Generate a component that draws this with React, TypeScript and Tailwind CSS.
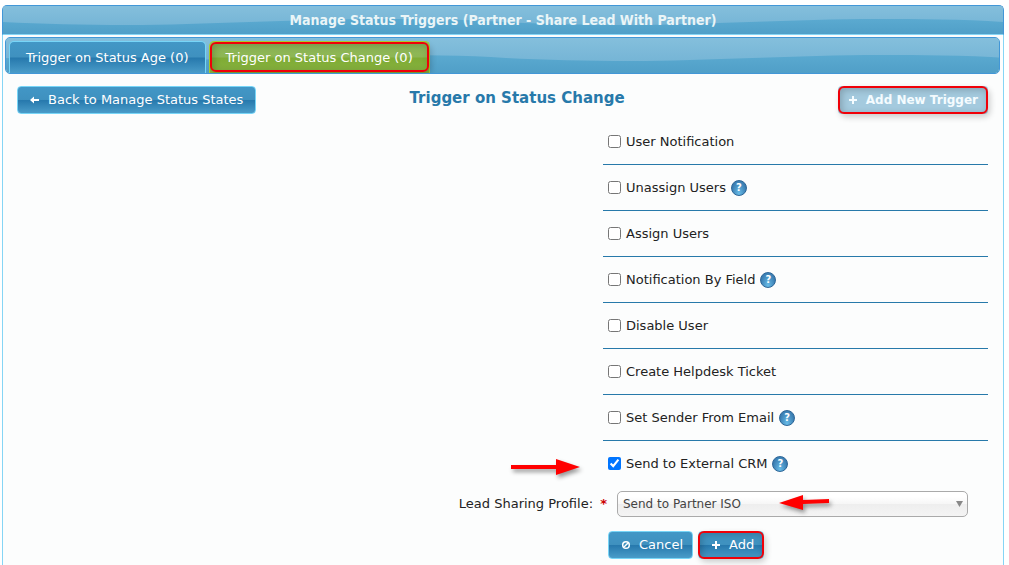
import { useId, useState, type ReactNode } from "react";
import { clsx } from "clsx";

const triggers = [
  { id: "user-notification", label: "User Notification", help: false },
  { id: "unassign-users", label: "Unassign Users", help: true },
  { id: "assign-users", label: "Assign Users", help: false },
  { id: "notification-by-field", label: "Notification By Field", help: true },
  { id: "disable-user", label: "Disable User", help: false },
  { id: "create-ticket", label: "Create Helpdesk Ticket", help: false },
  { id: "set-sender", label: "Set Sender From Email", help: true },
  { id: "external-crm", label: "Send to External CRM", help: true },
];

// Glossy wave behind the header bars, repeats every 500px
function WaveBackground({ tall }: { tall?: boolean }) {
  const id = useId();
  return (
    <svg className="absolute inset-0 h-full w-full" aria-hidden="true">
      <defs>
        <linearGradient id={`${id}-low`} x1="0" y1="0" x2="0" y2="1">
          <stop offset="0.4" stopColor="#5cabd1" />
          <stop offset="1" stopColor="#509fc8" />
        </linearGradient>
        <linearGradient id={`${id}-top`} x1="0" y1="0" x2="0" y2="1">
          <stop offset="0" stopColor="#84bfdc" />
          <stop offset="1" stopColor="#76b5d6" />
        </linearGradient>
        <pattern id={`${id}-wave`} width="500" height="40" patternUnits="userSpaceOnUse">
          <path
            d={
              tall
                ? "M0 0H500V20C460 17 415 17 375 17C290 17 200 23 125 23C80 23 40 22 0 20Z"
                : "M0 0H500V16C460 13 415 13 375 13C290 13 200 19 125 19C80 19 40 18 0 16Z"
            }
            fill={`url(#${id}-top)`}
          />
        </pattern>
      </defs>
      <rect width="100%" height="100%" fill={`url(#${id}-low)`} />
      <rect width="100%" height="100%" fill={`url(#${id}-wave)`} />
    </svg>
  );
}

// Red highlight box laid over a control
function Highlight({ className }: { className?: string }) {
  return (
    <span
      className={clsx(
        "pointer-events-none absolute rounded-md border-2 border-[#f00008] shadow-[2px_3px_6px_rgba(0,0,0,0.2),inset_2px_2px_7px_rgba(0,0,0,0.2)]",
        className ?? "inset-0"
      )}
    />
  );
}

function HelpIcon({ label }: { label: string }) {
  return (
    <button
      type="button"
      aria-label={`Help: ${label}`}
      className="flex h-4 w-4 items-center justify-center rounded-full border border-[#2c6698] bg-radial-[at_50%_90%] from-[#68bce8] to-[#2a679e] text-[10px] leading-none font-bold text-white"
    >
      ?
    </button>
  );
}

function GlossButton({ icon, children, highlight }: { icon: ReactNode; children: ReactNode; highlight?: boolean }) {
  return (
    <button
      type="button"
      className="relative flex h-7 items-center gap-2 rounded border border-[#77d5f7] bg-[linear-gradient(#4297c6_0%,#3f91bf_48%,#2779ad_52%,#4a9cc9_100%)] pr-[9px] pl-3 text-white"
    >
      {icon}
      {children}
      {highlight && <Highlight className="-inset-px" />}
    </button>
  );
}

function PlusIcon() {
  return (
    <svg width="10" height="10" viewBox="0 0 10 10" stroke="currentColor" strokeWidth="2" aria-hidden="true">
      <path d="M5 1V9M1 5H9" />
    </svg>
  );
}

function ArrowLeftIcon() {
  return (
    <svg width="10" height="10" viewBox="0 0 10 10" fill="currentColor" aria-hidden="true">
      <path d="M0 5L4 1.5V4H9V6H4V8.5Z" />
    </svg>
  );
}

function CancelIcon() {
  return (
    <svg width="10" height="10" viewBox="0 0 10 10" fill="none" stroke="currentColor" strokeWidth="1.5" aria-hidden="true">
      <circle cx="5" cy="5" r="3.3" />
      <path d="M3 7L7 3" />
    </svg>
  );
}

export default function App() {
  const [checked, setChecked] = useState<string[]>(["external-crm"]);

  const toggle = (id: string) =>
    setChecked((prev) => (prev.includes(id) ? prev.filter((item) => item !== id) : [...prev, id]));

  return (
    <div className="flex h-screen flex-col overflow-hidden bg-white pt-[5px] pr-[5px] pl-[2px] font-['DejaVu_Sans',Verdana,sans-serif] text-[13px] text-[#222]">
      <header className="relative flex h-[30px] shrink-0 items-center justify-center overflow-hidden rounded-t-[5px] border border-[#4297d7] border-b-[#85d5f5]">
        <WaveBackground />
        <h1 className="relative font-['DejaVu_Sans_Condensed','DejaVu_Sans',sans-serif] text-[14px] font-bold text-[#eaf5f7]">
          Manage Status Triggers (Partner - Share Lead With Partner)
        </h1>
      </header>

      <main className="flex-1 border-x border-[#85d5f5] bg-[#fcfdfd] pt-[2px] pr-[3px] pl-[2px]">
        <nav className="relative h-[37px] overflow-hidden rounded-[5px] border border-[#4297d7]">
          <WaveBackground tall />
          <div className="relative flex h-full items-end gap-[3px] pl-[3px]">
            <button
              type="button"
              className="h-8 rounded-t-[5px] border border-b-0 border-[#77d5f7] bg-[linear-gradient(#4297c6_0%,#3f91bf_48%,#2779ad_52%,#4a9cc9_100%)] px-4 text-white"
            >
              Trigger on Status Age (0)
            </button>
            <button
              type="button"
              className="relative h-8 rounded-t-[5px] border border-b-0 border-[#acd12f] bg-[linear-gradient(#8fb95a_0%,#8db654_48%,#7fac35_52%,#86b13f_100%)] px-4 text-white"
            >
              Trigger on Status Change (0)
              <Highlight className="inset-x-0 top-0 bottom-px" />
            </button>
          </div>
        </nav>

        <div className="px-3">
          <div className="mt-3 grid grid-cols-[25%_1fr_22%] items-center">
            <div className="flex">
              <GlossButton icon={<ArrowLeftIcon />}>
                <span className="pr-[3px] whitespace-nowrap">Back to Manage Status States</span>
              </GlossButton>
            </div>
            <h2 className="pb-1 text-center text-[15px] font-bold text-[#2779aa]">Trigger on Status Change</h2>
            <div className="flex justify-end">
              <button
                type="button"
                disabled
                className="relative flex h-7 items-center gap-2 rounded bg-[#a4cade] px-[10px] text-[12px] font-bold whitespace-nowrap text-[#f5fcff]"
              >
                <PlusIcon />
                Add New Trigger
                <Highlight />
              </button>
            </div>
          </div>

          <form className="mt-[5px] flex flex-col items-end">
            <ul className="w-[385px]">
              {triggers.map(({ id, label, help }) => (
                <li
                  key={id}
                  className="relative flex h-[46px] items-center gap-[5px] border-b border-[#2779aa] pl-[5px] last:border-b-transparent"
                >
                  {id === "external-crm" && (
                    <svg
                      className="absolute top-[17px] -left-[92px] drop-shadow-[2px_3px_2px_rgba(0,0,0,0.4)]"
                      width="70"
                      height="18"
                      viewBox="0 0 70 18"
                      fill="#f00"
                      aria-hidden="true"
                    >
                      <path d="M0 7H45V1L69 9L45 17V11H0Z" />
                    </svg>
                  )}
                  <input
                    id={id}
                    type="checkbox"
                    className="h-[13px] w-[13px]"
                    checked={checked.includes(id)}
                    onChange={() => toggle(id)}
                  />
                  <label htmlFor={id}>{label}</label>
                  {help && <HelpIcon label={label} />}
                </li>
              ))}
            </ul>

            <div className="mt-1 flex items-center pr-5">
              <label htmlFor="profile">
                Lead Sharing Profile: <span className="ml-[3px] font-bold text-[#c00]">*</span>
              </label>
              <div className="relative ml-[10px] w-[351px]">
                <select
                  id="profile"
                  className="h-[26px] w-full appearance-none rounded-[5px] border border-[#aaa] bg-[linear-gradient(#fff_20%,#f6f6f6_50%,#eee_52%,#f4f4f4_100%)] px-[5px] text-[12px] text-[#444]"
                >
                  <option>Send to Partner ISO</option>
                </select>
                <svg className="pointer-events-none absolute top-[10px] right-[5px]" width="7" height="6" fill="#888" aria-hidden="true">
                  <path d="M0 0H7L3.5 6Z" />
                </svg>
                <svg
                  className="pointer-events-none absolute top-[3px] left-[161px] drop-shadow-[2px_3px_2px_rgba(0,0,0,0.4)]"
                  width="51"
                  height="17"
                  viewBox="0 0 51 17"
                  fill="#f00"
                  aria-hidden="true"
                >
                  <path d="M1 9L25 1V6L51 5V9L25 10V16Z" />
                </svg>
              </div>
            </div>

            <div className="mt-[14px] flex w-[385px] gap-[5px] pl-[5px]">
              <GlossButton icon={<CancelIcon />}>Cancel</GlossButton>
              <GlossButton icon={<PlusIcon />} highlight>
                Add
              </GlossButton>
            </div>
          </form>
        </div>
      </main>
    </div>
  );
}
